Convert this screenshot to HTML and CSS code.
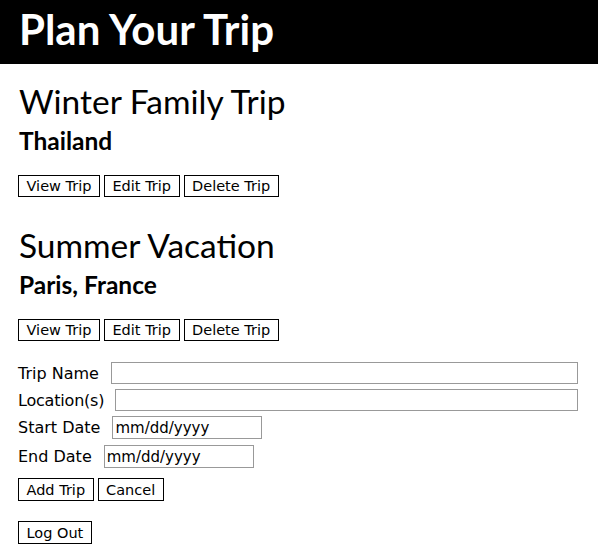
FILE: index.html
```html
<!DOCTYPE html>
<html>
<head>
<meta charset="utf-8">
<link rel="stylesheet" href="styles.css">
</head>
<body>
<header class="topbar"><h1 class="title">Plan Your Trip</h1></header>
<main class="content">
  <section class="trip">
    <h2 class="trip-name">Winter Family Trip</h2>
    <h3 class="trip-loc">Thailand</h3>
    <div class="actions">
      <button class="btn">View Trip</button>
      <button class="btn">Edit Trip</button>
      <button class="btn">Delete Trip</button>
    </div>
  </section>
  <section class="trip">
    <h2 class="trip-name">Summer Vacation</h2>
    <h3 class="trip-loc">Paris, France</h3>
    <div class="actions">
      <button class="btn">View Trip</button>
      <button class="btn">Edit Trip</button>
      <button class="btn">Delete Trip</button>
    </div>
  </section>
  <form class="trip-form">
    <div class="row"><label class="lbl">Trip Name</label><input class="field wide" type="text"></div>
    <div class="row"><label class="lbl lbl-loc">Location(s)</label><input class="field wide" type="text"></div>
    <div class="row"><label class="lbl">Start Date</label><input class="field date" type="text" placeholder="mm/dd/yyyy"></div>
    <div class="row row-end"><label class="lbl">End Date</label><input class="field date" type="text" placeholder="mm/dd/yyyy"></div>
    <div class="actions form-actions">
      <button class="btn" type="button">Add Trip</button>
      <button class="btn" type="button">Cancel</button>
    </div>
  </form>
  <div class="logout"><button class="btn">Log Out</button></div>
</main>
</body>
</html>
```
FILE: styles.css
```css
html, body { margin: 0; padding: 0; background: #fff; }
body { font-family: "DejaVu Sans", sans-serif; color: #000; }
.topbar { background: #000; height: 64px; box-sizing: border-box; padding: 8px 19px 0; }
.title { margin: 0; color: #fff; font-family: "Lato", sans-serif; font-weight: 700; font-size: 42px; line-height: 1; }
.content { padding: 0 20px 0 18px; }
.trip { padding-top: 17px; }
.trip + .trip { padding-top: 28px; }
.trip-name { margin: 0; font-family: "Lato", sans-serif; font-weight: 400; font-size: 33.5px; line-height: 40px; padding-left: 1px; }
.trip-loc { margin: 5px 0 0; font-family: "Lato", sans-serif; font-weight: 700; font-size: 24.5px; line-height: 30px; padding-left: 1px; }
.actions { display: flex; gap: 4px; margin-top: 19px; }
.btn { font-family: "DejaVu Sans", sans-serif; font-size: 14.5px; height: 22px; padding: 0 7.5px; border: 1px solid #000; background: #fff; color: #000; border-radius: 0; line-height: 20px; }
.trip-form { margin-top: 21px; display: flex; flex-direction: column; gap: 5px; }
.row { display: flex; align-items: center; gap: 12px; }
.row-end { margin-top: 1px; }
.lbl { font-size: 16px; line-height: 19px; }
.lbl-loc { letter-spacing: -0.2px; margin-right: -1px; }
.field { height: 22px; box-sizing: border-box; border: 1px solid #999; font-family: "DejaVu Sans", sans-serif; font-size: 15px; padding: 0 2px; margin: 0; }
.field::placeholder { color: #000; }
.wide { flex: 1; }
.date { width: 150px; height: 23px; }
.form-actions { margin-top: 5px; }
.form-actions .btn { height: 23px; }
.logout { margin-top: 20px; }
.logout .btn { height: 23px; }
```
